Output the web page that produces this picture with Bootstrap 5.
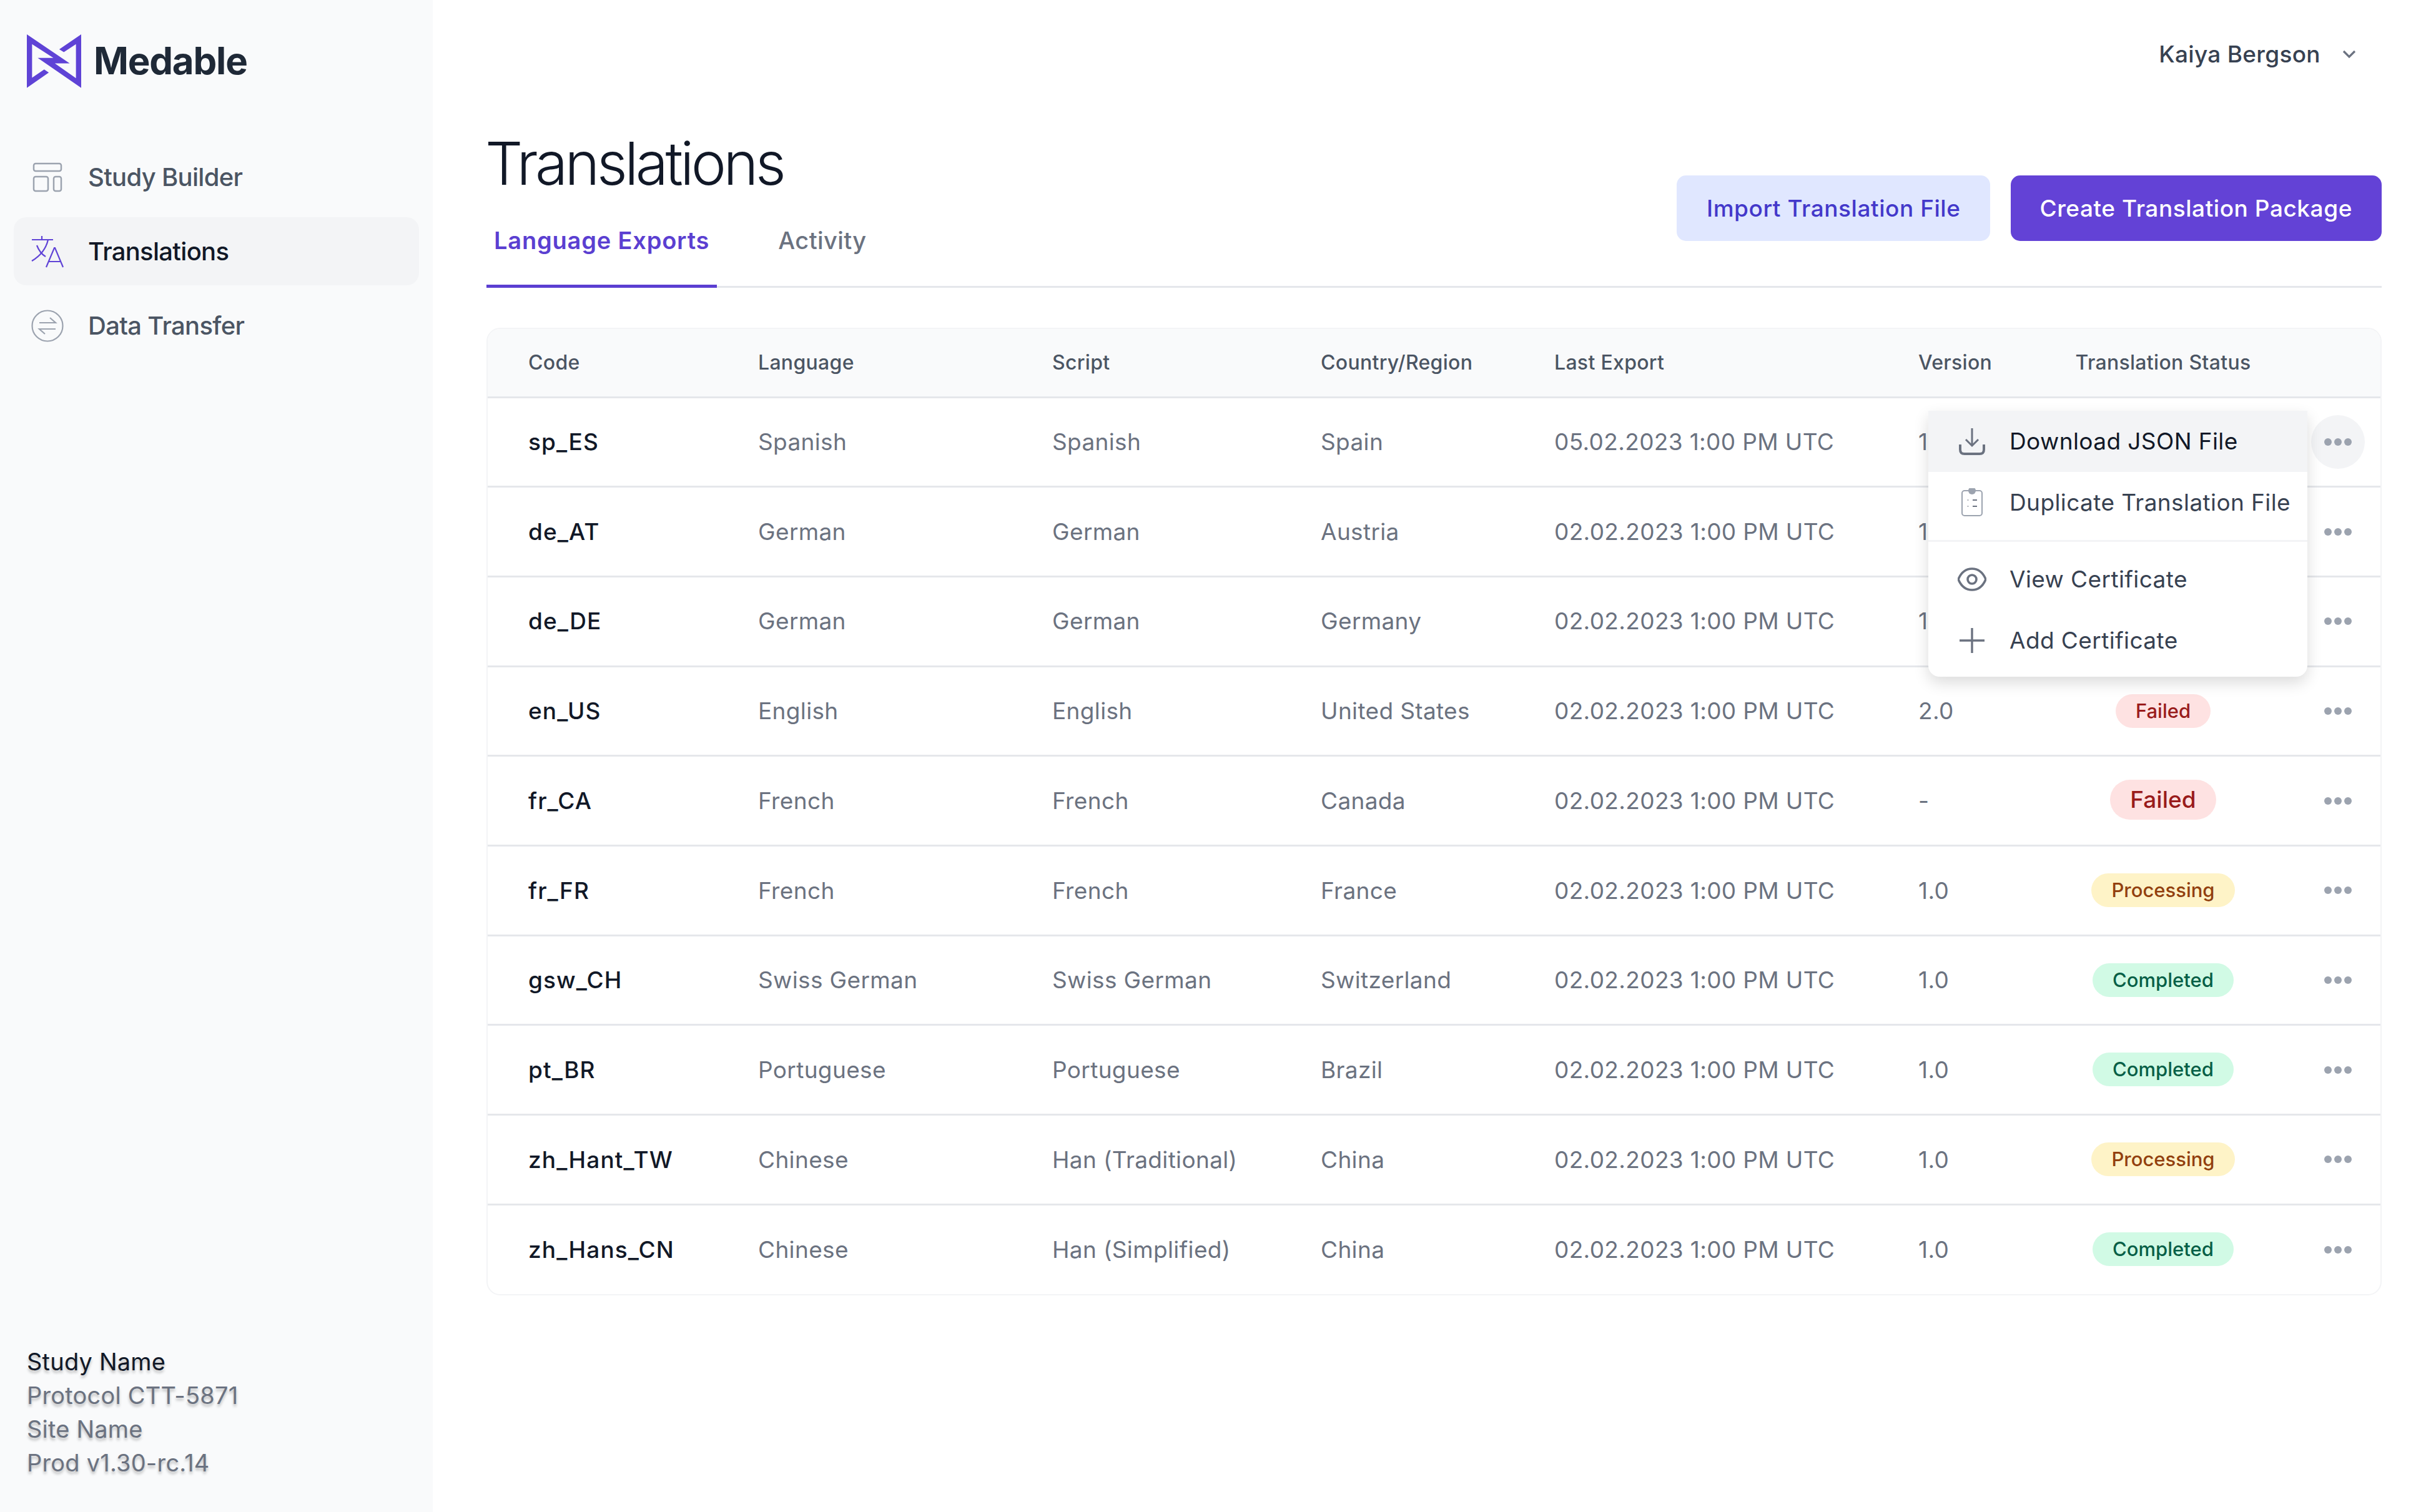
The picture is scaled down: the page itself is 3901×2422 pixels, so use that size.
<!DOCTYPE html>
<html lang="en">
<head>
    <meta charset="UTF-8">
    <meta name="viewport" content="width=device-width, initial-scale=1.0">
    <title>Translations</title>
    <link href="https://cdn.jsdelivr.net/npm/bootstrap@5.3.0/dist/css/bootstrap.min.css" rel="stylesheet">
    <style>
        body { font-family: Inter, "Liberation Sans", sans-serif; color: #111827; background: #fff; }
        .side-bar { width: 693px; flex: none; background: #f9fafb; padding: 55px 22px 0; }
        .logo-row { padding-left: 21px; height: 85px; gap: 20px; margin-bottom: 89px; }
        .logo-text { font-size: 60px; font-weight: 700; color: #1f2937; letter-spacing: -1.2px; line-height: 85px; }
        .side-link { height: 109px; margin-bottom: 10px; padding-left: 28px; gap: 39px; font-size: 40px; letter-spacing: -0.7px; color: #4b5563; border-radius: 20px; font-weight: 500; }
        .side-link.current { background: #f3f4f6; color: #111827; }
        .side-foot { padding: 0 0 52px 21px; font-size: 38px; letter-spacing: .2px; line-height: 54px; color: #6b7280; text-shadow: 0 4px 4px rgba(0,0,0,.25); }
        .side-foot div:first-child { color: #111827; }
        .main-area { padding: 0 87px 0 86px; min-width: 0; }
        .user-bar { height: 174px; padding: 0 41px 0 0; gap: 35px; font-size: 37px; letter-spacing: .3px; color: #374151; font-weight: 500; }
        .head-row { height: 287px; border-bottom: 3px solid #e5e7eb; }
        .page-title { font-size: 95px; font-weight: 300; letter-spacing: -4.6px; line-height: 110px; margin: 33px 0 0 -2px; color: #111827; }
        .tab-row { margin-top: 32px; }
        .tab-item { padding: 0 12px; height: 112px; font-size: 38px; letter-spacing: .4px; color: #6b7280; font-weight: 500; line-height: 72px; margin-right: 86px; }
        .tab-item.active-tab { color: #5b3fd1; font-weight: 600; letter-spacing: .8px; border-bottom: 5px solid #5b3fd1; }
        .btn-set { margin-top: 107px; gap: 33px; }
        .act-btn { height: 105px; padding: 0 47px; border: 0; border-radius: 15px; font-size: 37px; letter-spacing: .55px; font-weight: 500; }
        .btn-soft { background: #e0e7ff; color: #4338ca; padding: 0 47px 0 48px; }
        .btn-solid { background: #6342d6; color: #fff; }
        .table-box { border: 2px solid #f3f4f6; border-radius: 22px; overflow: hidden; }
        .table-wrap { margin-top: 64px; }
        .tx-table { table-layout: fixed; width: 100%; margin: 0; font-size: 35px; }
        .tx-table th { height: 109px; background: #f9fafb; font-weight: 500; font-size: 32px; letter-spacing: .3px; color: #4b5563; border-bottom: 3px solid #e5e7eb; padding: 0; vertical-align: middle; }
        .tx-table td { height: 143.7px; padding: 0; color: #6b7280; border-bottom: 3px solid #e5e7eb; vertical-align: middle; font-size: 37px; letter-spacing: .35px; }
        .tx-table tr:last-child td { border-bottom: 0; }
        .tx-table th:first-child { padding-left: 65px; }
        .tx-table td:first-child { padding-left: 65px; color: #111827; font-weight: 450; letter-spacing: 1.1px; }
        .st-pill { display: inline-block; height: 54px; line-height: 54px; padding: 0 32px; border-radius: 27px; font-size: 31px; letter-spacing: 0; font-weight: 500; vertical-align: middle; margin-bottom: 3px; }
        .st-pill.big { height: 64px; line-height: 64px; border-radius: 32px; font-size: 37px; }
        .st-failed { background: #fee2e2; color: #991b1b; }
        .st-processing { background: #fef3c7; color: #92400e; }
        .st-completed { background: #d1fae5; color: #065f46; }
        .dots-btn { display: inline-flex; align-items: center; justify-content: center; vertical-align: middle; width: 86px; height: 86px; margin-right: 25px; border: 0; border-radius: 50%; background: transparent; padding: 0; }
        .dots-btn.on { background: #f3f4f6; }
        .row-menu { display: block; top: 133px; left: 2309px; width: 607px; padding: 0 0 9px; border: 0; border-radius: 0 0 18px 18px; box-shadow: 0 10px 24px rgba(0,0,0,.14); background: #fff; }
        .menu-line { height: 98px; padding: 0 0 0 47px; gap: 37px; font-size: 37px; letter-spacing: .4px; color: #374151; font-weight: 400; }
        .menu-line.hovered { background: #f3f4f6; color: #111827; }
        .menu-line svg { width: 46px; flex: none; }
        .menu-rule { margin: 11px 0 11px; border: 0; border-top: 3px solid #f3f4f6; opacity: 1; }
    </style>
</head>
<body>
    <svg width="0" height="0" class="position-absolute">
        <symbol id="dots" viewBox="0 0 44 12"><circle cx="6" cy="6" r="6" fill="#9ca3af"/><circle cx="22" cy="6" r="6" fill="#9ca3af"/><circle cx="38" cy="6" r="6" fill="#9ca3af"/></symbol>
    </svg>
    <div class="d-flex min-vh-100">
        <!-- Sidebar -->
        <aside class="side-bar d-flex flex-column">
            <div class="logo-row d-flex align-items-center">
                <svg width="87" height="86" viewBox="70 75 260 257"><polygon fill="#5f43d6" points="70,75 275,214 204,214 305,285 305,122 247,160 225,147 330,75 330,331 122,188 197,188 95,122 95,283 153,243 175,258 70,331"/></svg>
                <span class="logo-text">Medable</span>
            </div>
            <a class="side-link d-flex align-items-center text-decoration-none">
                <svg width="52" height="52" viewBox="0 0 52 52" fill="none" stroke="#9ca3af" stroke-width="2.5"><rect x="4" y="4" width="44" height="12" rx="3"/><rect x="4" y="25" width="23" height="23" rx="3"/><rect x="36" y="25" width="12" height="23" rx="3"/></svg>
                <span>Study Builder</span>
            </a>
            <a class="side-link current d-flex align-items-center text-decoration-none">
                <svg width="52" height="52" viewBox="0 0 52 52" fill="none" stroke="#5f43d6" stroke-width="2.2"><path d="M1 7h34M17 1v6M27 7c-3 13-11 25-26 34M9 16c3 8 9 15 14 18"/><path d="M24 51l13-31h1l13 31M28 42h19"/></svg>
                <span>Translations</span>
            </a>
            <a class="side-link d-flex align-items-center text-decoration-none">
                <svg width="52" height="52" viewBox="0 0 52 52" fill="none" stroke="#9ca3af" stroke-width="2.2"><circle cx="26" cy="26" r="24.5"/><path d="M13 21h26l-9-8M39 31H13l9 8"/></svg>
                <span>Data Transfer</span>
            </a>
            <div class="side-foot mt-auto">
                <div>Study Name</div>
                <div>Protocol CTT-5871</div>
                <div>Site Name</div>
                <div>Prod v1.30-rc.14</div>
            </div>
        </aside>

        <!-- Main -->
        <main class="main-area flex-grow-1">
            <div class="user-bar d-flex justify-content-end align-items-center">
                <span>Kaiya Bergson</span>
                <svg width="22" height="14" viewBox="0 0 22 14" fill="none" stroke="#6b7280" stroke-width="3.2"><path d="M2 2l9 9 9-9"/></svg>
            </div>
            <div class="head-row d-flex justify-content-between align-items-start">
                <div>
                    <h1 class="page-title">Translations</h1>
                    <div class="tab-row d-flex">
                        <div class="tab-item active-tab">Language Exports</div>
                        <div class="tab-item">Activity</div>
                    </div>
                </div>
                <div class="d-flex btn-set">
                    <button type="button" class="act-btn btn-soft">Import Translation File</button>
                    <button type="button" class="act-btn btn-solid">Create Translation Package</button>
                </div>
            </div>

            <div class="table-wrap position-relative">
                <div class="table-box">
                    <table class="table tx-table">
                        <colgroup><col style="width:433px"><col style="width:471px"><col style="width:430px"><col style="width:374px"><col style="width:583px"><col style="width:251px"><col style="width:282px"><col></colgroup>
                        <thead>
                            <tr><th>Code</th><th>Language</th><th>Script</th><th>Country/Region</th><th>Last Export</th><th>Version</th><th class="text-center">Translation Status</th><th></th></tr>
                        </thead>
                        <tbody>
                            <tr><td>sp_ES</td><td>Spanish</td><td>Spanish</td><td>Spain</td><td>05.02.2023 1:00 PM UTC</td><td>1.0</td><td class="text-center"></td><td class="text-end"><button class="dots-btn on"><svg width="44" height="12"><use href="#dots"/></svg></button></td></tr>
                            <tr><td>de_AT</td><td>German</td><td>German</td><td>Austria</td><td>02.02.2023 1:00 PM UTC</td><td>1.0</td><td class="text-center"></td><td class="text-end"><button class="dots-btn"><svg width="44" height="12"><use href="#dots"/></svg></button></td></tr>
                            <tr><td>de_DE</td><td>German</td><td>German</td><td>Germany</td><td>02.02.2023 1:00 PM UTC</td><td>1.0</td><td class="text-center"></td><td class="text-end"><button class="dots-btn"><svg width="44" height="12"><use href="#dots"/></svg></button></td></tr>
                            <tr><td>en_US</td><td>English</td><td>English</td><td>United States</td><td>02.02.2023 1:00 PM UTC</td><td>2.0</td><td class="text-center"><span class="st-pill st-failed">Failed</span></td><td class="text-end"><button class="dots-btn"><svg width="44" height="12"><use href="#dots"/></svg></button></td></tr>
                            <tr><td>fr_CA</td><td>French</td><td>French</td><td>Canada</td><td>02.02.2023 1:00 PM UTC</td><td>-</td><td class="text-center"><span class="st-pill big st-failed">Failed</span></td><td class="text-end"><button class="dots-btn"><svg width="44" height="12"><use href="#dots"/></svg></button></td></tr>
                            <tr><td>fr_FR</td><td>French</td><td>French</td><td>France</td><td>02.02.2023 1:00 PM UTC</td><td>1.0</td><td class="text-center"><span class="st-pill st-processing">Processing</span></td><td class="text-end"><button class="dots-btn"><svg width="44" height="12"><use href="#dots"/></svg></button></td></tr>
                            <tr><td>gsw_CH</td><td>Swiss German</td><td>Swiss German</td><td>Switzerland</td><td>02.02.2023 1:00 PM UTC</td><td>1.0</td><td class="text-center"><span class="st-pill st-completed">Completed</span></td><td class="text-end"><button class="dots-btn"><svg width="44" height="12"><use href="#dots"/></svg></button></td></tr>
                            <tr><td>pt_BR</td><td>Portuguese</td><td>Portuguese</td><td>Brazil</td><td>02.02.2023 1:00 PM UTC</td><td>1.0</td><td class="text-center"><span class="st-pill st-completed">Completed</span></td><td class="text-end"><button class="dots-btn"><svg width="44" height="12"><use href="#dots"/></svg></button></td></tr>
                            <tr><td>zh_Hant_TW</td><td>Chinese</td><td>Han (Traditional)</td><td>China</td><td>02.02.2023 1:00 PM UTC</td><td>1.0</td><td class="text-center"><span class="st-pill st-processing">Processing</span></td><td class="text-end"><button class="dots-btn"><svg width="44" height="12"><use href="#dots"/></svg></button></td></tr>
                            <tr><td>zh_Hans_CN</td><td>Chinese</td><td>Han (Simplified)</td><td>China</td><td>02.02.2023 1:00 PM UTC</td><td>1.0</td><td class="text-center"><span class="st-pill st-completed">Completed</span></td><td class="text-end"><button class="dots-btn"><svg width="44" height="12"><use href="#dots"/></svg></button></td></tr>
                        </tbody>
                    </table>
                </div>
                <!-- Open row menu -->
                <div class="dropdown-menu row-menu position-absolute">
                    <div class="menu-line hovered d-flex align-items-center">
                        <svg height="46" viewBox="0 0 46 46" fill="none" stroke="#6b7280" stroke-width="3"><path d="M23 2v27M13 20l10 10 10-10" /><path d="M4 28v8c0 5 2 7 7 7h24c5 0 7-2 7-7v-8" stroke-width="4"/></svg>
                        <span>Download JSON File</span>
                    </div>
                    <div class="menu-line d-flex align-items-center">
                        <svg height="46" viewBox="0 0 46 46" fill="none" stroke="#9ca3af" stroke-width="2"><rect x="7" y="4" width="32" height="40" rx="4"/><circle cx="23" cy="4" r="6" fill="#9ca3af" stroke="none"/><path d="M16 19h1M16 29h1M24 19h7M24 29h7" stroke="#6b7280"/></svg>
                        <span>Duplicate Translation File</span>
                    </div>
                    <hr class="menu-rule">
                    <div class="menu-line d-flex align-items-center">
                        <svg height="46" viewBox="0 0 46 46" fill="none" stroke="#6b7280" stroke-width="3.6"><path d="M1 23C6 11 14 6 23 6s17 5 22 17c-5 12-13 17-22 17S6 35 1 23z"/><circle cx="23" cy="23" r="7"/></svg>
                        <span>View Certificate</span>
                    </div>
                    <div class="menu-line d-flex align-items-center">
                        <svg height="46" viewBox="0 0 46 46" fill="none" stroke="#6b7280" stroke-width="3.4"><path d="M23 3v40M3 23h40"/></svg>
                        <span>Add Certificate</span>
                    </div>
                </div>
            </div>
        </main>
    </div>
    <script src="https://cdn.jsdelivr.net/npm/bootstrap@5.3.0/dist/js/bootstrap.bundle.min.js"></script>
</body>
</html>
